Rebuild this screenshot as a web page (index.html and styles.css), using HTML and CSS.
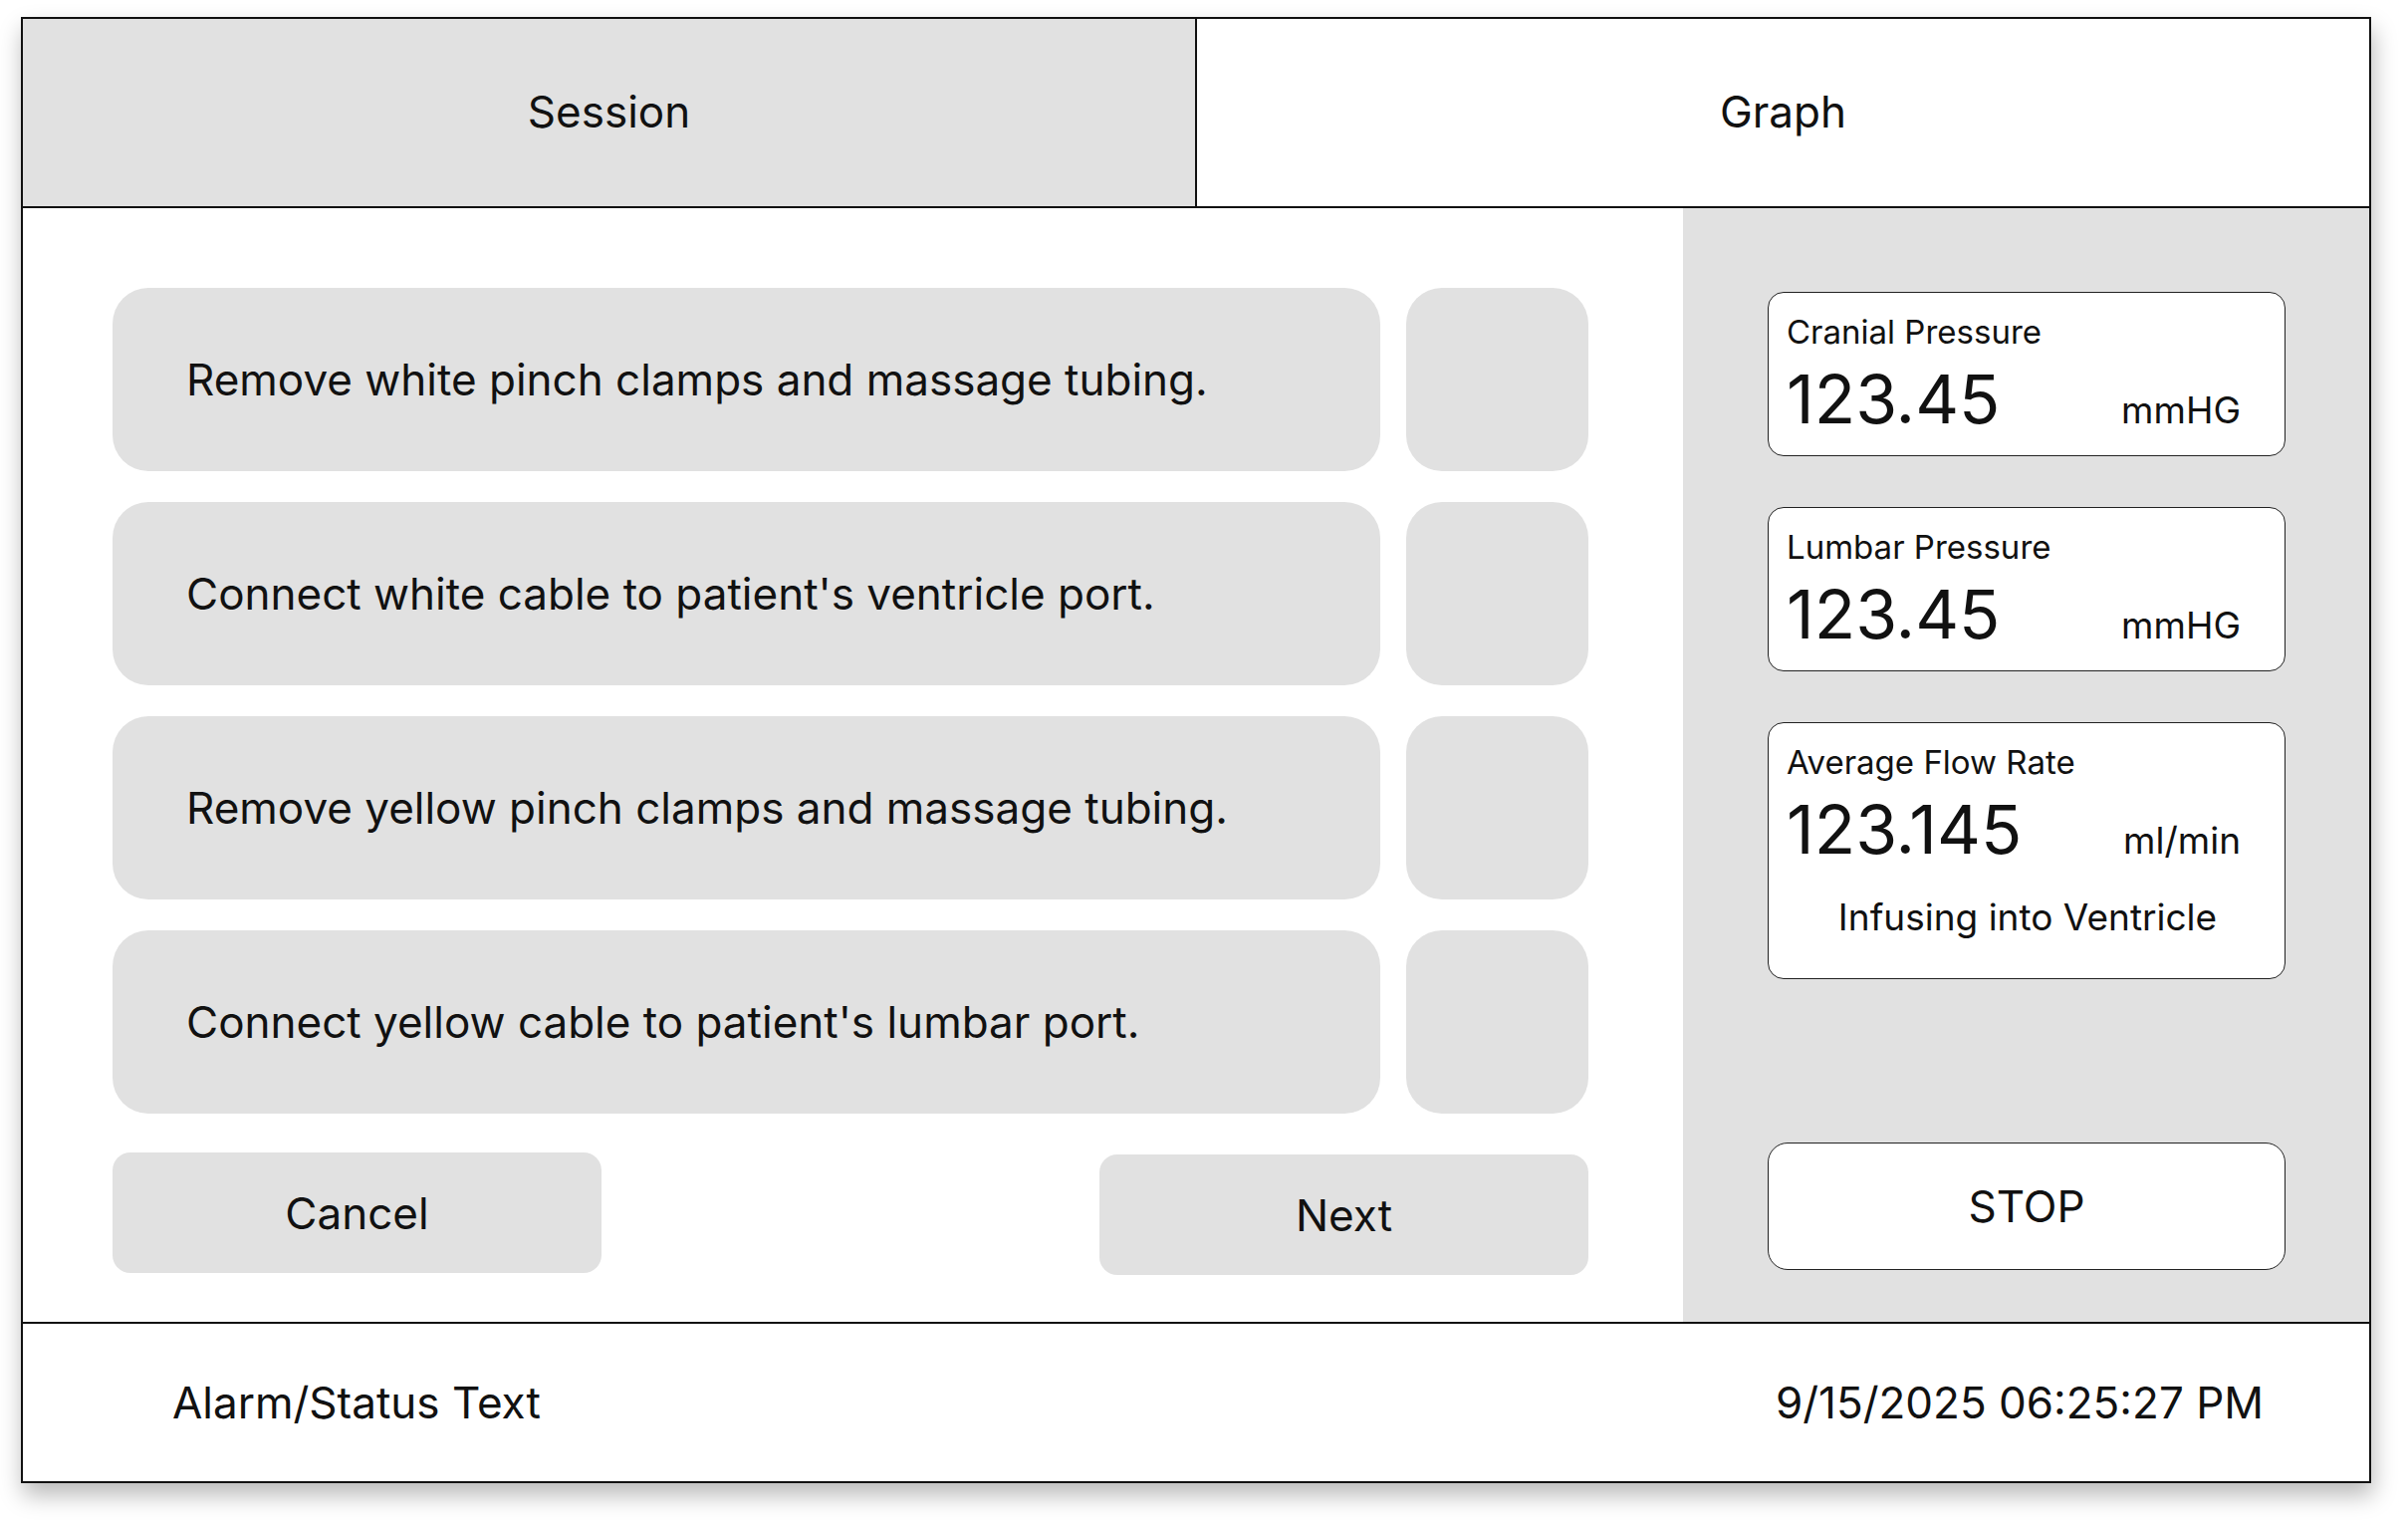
FILE: index.html
```html
<!DOCTYPE html>
<html lang="en">
<head>
<meta charset="utf-8">
<title>Session</title>
<link rel="stylesheet" href="styles.css">
</head>
<body>
<div class="frame">
  <div class="tabs">
    <div class="tab tab-active">Session</div>
    <div class="tab">Graph</div>
  </div>
  <div class="main">
    <div class="steps">
      <div class="step">
        <div class="step-text">Remove white pinch clamps and massage tubing.</div>
        <div class="step-check"></div>
      </div>
      <div class="step">
        <div class="step-text">Connect white cable to patient's ventricle port.</div>
        <div class="step-check"></div>
      </div>
      <div class="step">
        <div class="step-text">Remove yellow pinch clamps and massage tubing.</div>
        <div class="step-check"></div>
      </div>
      <div class="step">
        <div class="step-text">Connect yellow cable to patient's lumbar port.</div>
        <div class="step-check"></div>
      </div>
      <div class="actions">
        <div class="btn btn-cancel">Cancel</div>
        <div class="btn btn-next">Next</div>
      </div>
    </div>
    <div class="side">
      <div class="card">
        <div class="card-label">Cranial Pressure</div>
        <div class="card-row">
          <span class="card-value">123.45</span>
          <span class="card-unit">mmHG</span>
        </div>
      </div>
      <div class="card">
        <div class="card-label">Lumbar Pressure</div>
        <div class="card-row">
          <span class="card-value">123.45</span>
          <span class="card-unit">mmHG</span>
        </div>
      </div>
      <div class="card card-flow">
        <div class="card-label">Average Flow Rate</div>
        <div class="card-row">
          <span class="card-value">123.145</span>
          <span class="card-unit">ml/min</span>
        </div>
        <div class="card-note">Infusing into Ventricle</div>
      </div>
      <div class="stop">STOP</div>
    </div>
  </div>
  <div class="footer">
    <div class="status">Alarm/Status Text</div>
    <div class="clock">9/15/2025 06:25:27 PM</div>
  </div>
</div>
</body>
</html>
```

FILE: styles.css
```css
* { box-sizing: border-box; }

html, body {
  margin: 0;
  padding: 0;
  background: #ffffff;
}

body {
  font-family: Inter, "Noto Sans", "Liberation Sans", sans-serif;
  color: #111111;
  width: 2418px;
  height: 1532px;
  padding: 17px 0 0 21px;
}

.frame {
  width: 2360px;
  height: 1472px;
  border: 2px solid #111111;
  background: #ffffff;
  display: flex;
  flex-direction: column;
  box-shadow: 2px 12px 22px rgba(0, 0, 0, 0.28);
}

.tabs {
  display: flex;
  height: 190px;
  border-bottom: 2px solid #111111;
  flex: 0 0 auto;
}

.tab {
  flex: 1 1 0;
  display: flex;
  align-items: center;
  justify-content: center;
  font-size: 44px;
  padding-bottom: 2px;
  background: #ffffff;
}

.tab-active {
  background: #e1e1e1;
  border-right: 2px solid #111111;
}

.main {
  flex: 1 1 auto;
  display: flex;
  min-height: 0;
}

.steps {
  flex: 1 1 auto;
  padding: 80px 95px 0 90px;
  display: flex;
  flex-direction: column;
  gap: 31px;
}

.step {
  display: flex;
  gap: 26px;
  height: 184px;
}

.step-text {
  flex: 1 1 auto;
  background: #e1e1e1;
  border-radius: 36px;
  display: flex;
  align-items: center;
  padding-left: 74px;
  font-size: 44px;
}

.step-check {
  flex: 0 0 183px;
  background: #e1e1e1;
  border-radius: 36px;
}

.actions {
  display: flex;
  justify-content: space-between;
  margin-top: 8px;
}

.btn {
  width: 491px;
  height: 121px;
  background: #e1e1e1;
  border-radius: 18px;
  display: flex;
  align-items: center;
  justify-content: center;
  font-size: 44px;
}

.btn-next {
  margin-top: 2px;
}

.side {
  flex: 0 0 689px;
  background: #e1e1e1;
  padding: 84px 84px 52px 85px;
  display: flex;
  flex-direction: column;
  gap: 51px;
}

.card {
  background: #ffffff;
  border: 1.5px solid #222222;
  border-radius: 16px;
  padding: 20px 44px 12px 18px;
  height: 165px;
}

.card-flow {
  height: 258px;
}

.card-label {
  font-size: 33px;
  line-height: 38px;
}

.card-row {
  display: flex;
  justify-content: space-between;
  align-items: baseline;
  margin-top: 9px;
}

.card-value {
  font-size: 68px;
  line-height: 79px;
}

.card-unit {
  font-size: 37px;
}

.card-note {
  font-size: 37px;
  line-height: 42px;
  text-align: center;
  margin-top: 28px;
  padding-left: 28px;
}

.stop {
  margin-top: auto;
  height: 128px;
  background: #ffffff;
  border: 1.5px solid #222222;
  border-radius: 20px;
  display: flex;
  align-items: center;
  justify-content: center;
  font-size: 44px;
}

.footer {
  flex: 0 0 160px;
  border-top: 2px solid #111111;
  display: flex;
  align-items: center;
  justify-content: space-between;
  padding: 0 106px 0 150px;
  font-size: 44px;
}
```
